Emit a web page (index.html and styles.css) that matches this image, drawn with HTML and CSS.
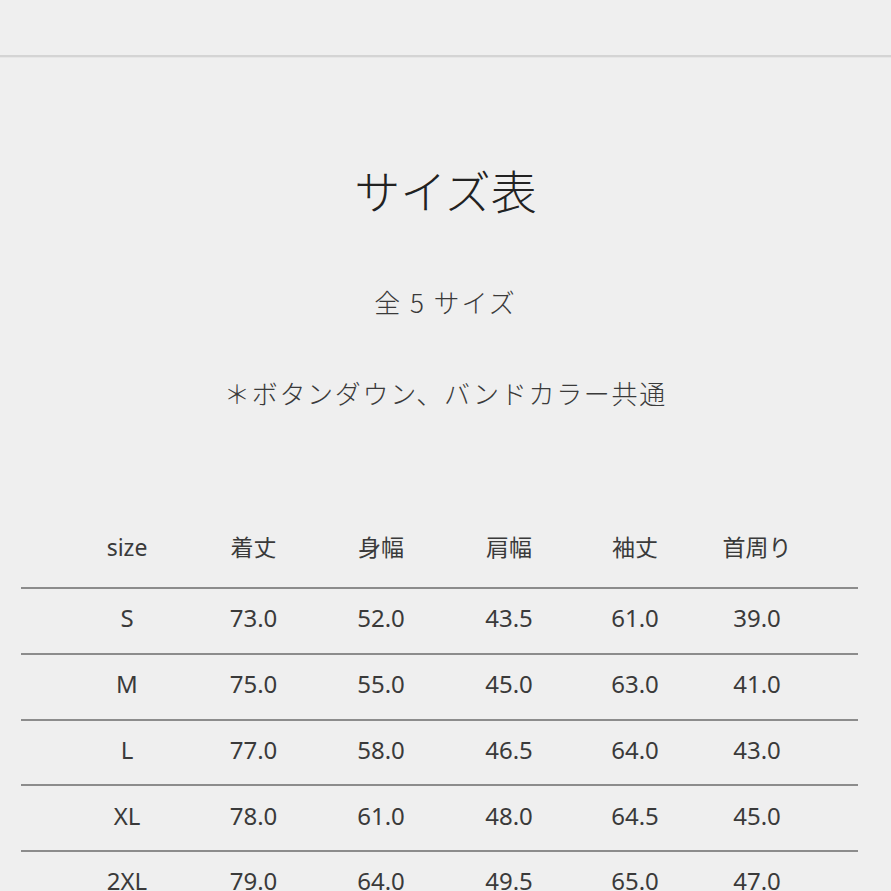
FILE: index.html
```html
<!DOCTYPE html>
<html lang="ja">
<head>
<meta charset="utf-8">
<title>サイズ表</title>
<link rel="stylesheet" href="styles.css">
</head>
<body>
<div class="topbar"></div>
<main class="page">
  <h1 class="title">サイズ表</h1>
  <p class="sub">全 5 サイズ</p>
  <p class="note">＊ボタンダウン、バンドカラー共通</p>
  <div class="table">
    <div class="row head">
      <span>size</span><span>着丈</span><span>身幅</span><span>肩幅</span><span>袖丈</span><span>首周り</span>
    </div>
    <div class="row">
      <span>S</span><span>73.0</span><span>52.0</span><span>43.5</span><span>61.0</span><span>39.0</span>
    </div>
    <div class="row">
      <span>M</span><span>75.0</span><span>55.0</span><span>45.0</span><span>63.0</span><span>41.0</span>
    </div>
    <div class="row">
      <span>L</span><span>77.0</span><span>58.0</span><span>46.5</span><span>64.0</span><span>43.0</span>
    </div>
    <div class="row">
      <span>XL</span><span>78.0</span><span>61.0</span><span>48.0</span><span>64.5</span><span>45.0</span>
    </div>
    <div class="row">
      <span>2XL</span><span>79.0</span><span>64.0</span><span>49.5</span><span>65.0</span><span>47.0</span>
    </div>
  </div>
</main>
</body>
</html>
```

FILE: styles.css
```css
html, body {
  margin: 0;
  padding: 0;
  background: #efefef;
}
body {
  font-family: "Noto Sans CJK JP", "Noto Sans", sans-serif;
  color: #333;
  overflow: hidden;
  height: 891px;
}
.topbar {
  height: 55px;
  border-bottom: 2px solid #d4d4d4;
  box-shadow: 0 1px 0 #e6e6e6;
}
.page {
  display: flex;
  flex-direction: column;
  align-items: center;
}
.title {
  margin: 104px 0 0;
  font-size: 46px;
  line-height: 56px;
  font-weight: 300;
  color: #222;
}
.sub {
  margin: 67px 0 0;
  font-size: 26px;
  line-height: 36px;
  font-weight: 300;
  letter-spacing: 2px;
  color: #3a3a3a;
}
.note {
  margin: 55px 0 0;
  font-size: 26px;
  line-height: 36px;
  font-weight: 300;
  letter-spacing: 1.7px;
  color: #3a3a3a;
}
.table {
  align-self: stretch;
  margin: 116px 33px 0 21px;
  font-family: "Noto Sans", "Noto Sans CJK JP", sans-serif;
}
.row {
  display: grid;
  grid-template-columns: 126px 127px 128px 128px 124px 120px;
  padding: 0 41px 6px 43px;
  height: 57.75px;
  align-items: center;
  border-bottom: 2px solid #8c8c8c;
  font-size: 24px;
  color: #3a3a3a;
}
.row span {
  text-align: center;
}
.row.head {
  height: 60px;
  padding-bottom: 0;
  align-items: start;
  line-height: 40px;
  font-size: 23px;
}
```
